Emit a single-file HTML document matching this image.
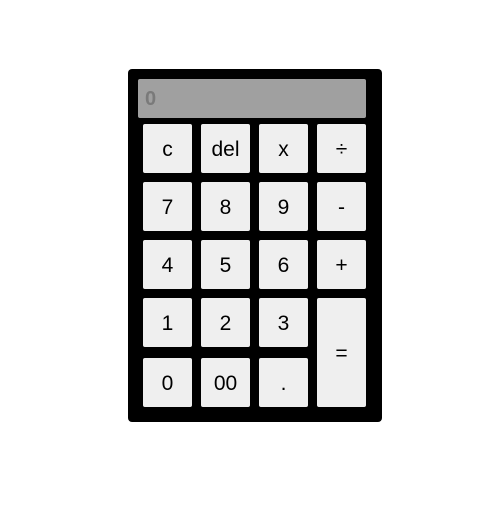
<!DOCTYPE html>
<html><head><style>
body{margin:0;width:492px;height:506px;background:#fff;position:relative;font-family:"Liberation Sans",sans-serif;}
.c{position:absolute;left:128px;top:69px;width:254px;height:353px;background:#000;border-radius:4px;}
.d{position:absolute;left:138px;top:79px;width:228px;height:39px;background:#a0a0a0;border-radius:2px;color:#7a7a7a;font-weight:bold;font-size:20px;line-height:40px;box-sizing:border-box;padding-left:7px;}
.b{position:absolute;width:49px;height:49px;background:#efefef;border-radius:2px;font-size:21px;display:flex;align-items:center;justify-content:center;color:#000;padding-top:2px;box-sizing:border-box;}
</style></head><body>
<div class="c"></div>
<div class="d">0</div>
<div class="b" style="left:143px;top:124px">c</div>
<div class="b" style="left:201px;top:124px">del</div>
<div class="b" style="left:259px;top:124px">x</div>
<div class="b" style="left:317px;top:124px">÷</div>
<div class="b" style="left:143px;top:182px">7</div>
<div class="b" style="left:201px;top:182px">8</div>
<div class="b" style="left:259px;top:182px">9</div>
<div class="b" style="left:317px;top:182px">-</div>
<div class="b" style="left:143px;top:240px">4</div>
<div class="b" style="left:201px;top:240px">5</div>
<div class="b" style="left:259px;top:240px">6</div>
<div class="b" style="left:317px;top:240px">+</div>
<div class="b" style="left:143px;top:298px">1</div>
<div class="b" style="left:201px;top:298px">2</div>
<div class="b" style="left:259px;top:298px">3</div>
<div class="b" style="left:317px;top:298px;height:109px">=</div>
<div class="b" style="left:143px;top:358px">0</div>
<div class="b" style="left:201px;top:358px">00</div>
<div class="b" style="left:259px;top:358px">.</div>
</body></html>
